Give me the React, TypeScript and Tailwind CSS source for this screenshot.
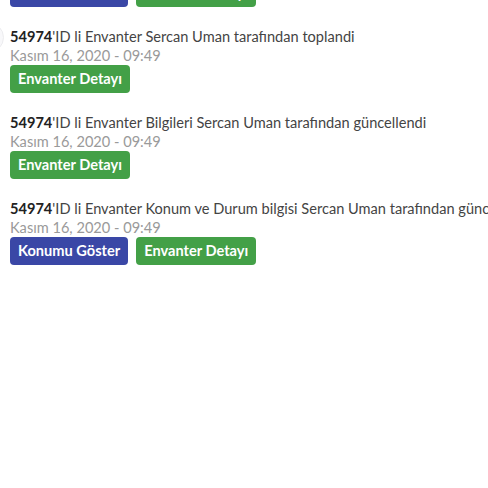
import React from 'react';

interface LogItem {
  id: string;
  text: string;
  date: string;
  showLocation?: boolean;
}

const items: LogItem[] = [
  { id: '54974', text: "'ID li Envanter Sercan Uman tarafından toplandi", date: 'Kasım 16, 2020 - 09:49' },
  { id: '54974', text: "'ID li Envanter Bilgileri Sercan Uman tarafından güncellendi", date: 'Kasım 16, 2020 - 09:49' },
  {
    id: '54974',
    text: "'ID li Envanter Konum ve Durum bilgisi Sercan Uman tarafından güncellendi",
    date: 'Kasım 16, 2020 - 09:49',
    showLocation: true,
  },
];

const Actions: React.FC<{ showLocation?: boolean }> = ({ showLocation }) => (
  <div className="flex gap-2">
    {showLocation && (
      <button className="h-7 px-2 rounded bg-[#3a47a6] text-white font-bold text-[14.6px]">Konumu Göster</button>
    )}
    <button className="h-7 px-2 rounded bg-[#43a047] text-white font-bold text-[14.6px]">Envanter Detayı</button>
  </div>
);

const App: React.FC = () => {
  return (
    <div className="relative w-[488px] h-[488px] overflow-hidden bg-white font-['Lato',sans-serif]">
      <div className="absolute -left-[27px] top-[22px] w-[31px] h-[31px] rounded-full border border-[#ececef] bg-[#f8f8fa]" />
      <div className="pl-[10px] -mt-[21px] flex flex-col gap-[20px]">
        <Actions showLocation />
        {items.map((item, i) => (
          <div key={i} className="flex flex-col">
            <div className="whitespace-nowrap text-[14.6px] leading-[19px] text-[#444]">
              <span className="font-bold text-[#222]">{item.id}</span>
              {item.text}
            </div>
            <div className="text-[14.6px] leading-[19px] text-[#9a9a9a]">{item.date}</div>
            <Actions showLocation={item.showLocation} />
          </div>
        ))}
      </div>
    </div>
  );
};

export default App;
